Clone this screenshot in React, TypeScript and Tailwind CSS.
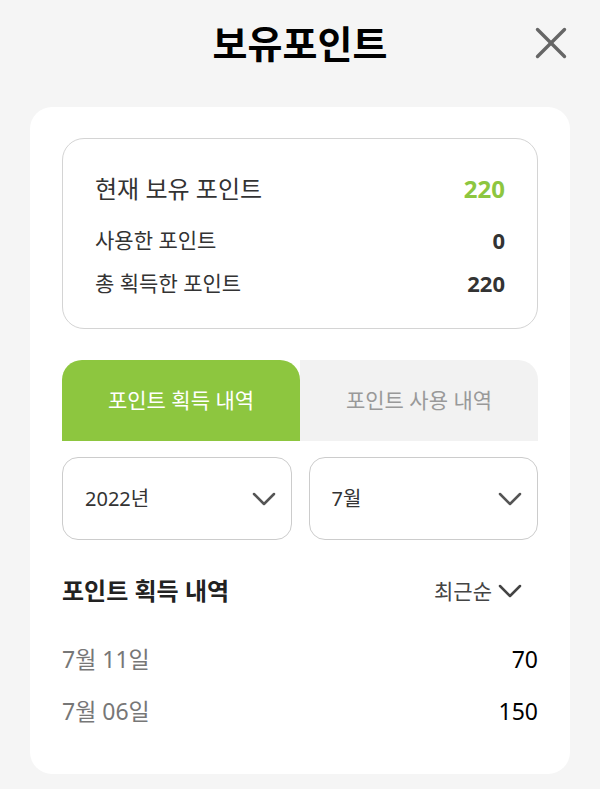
import { X, ChevronDown } from 'lucide-react'

const font = { fontFamily: '"Noto Sans", "Noto Sans CJK KR", sans-serif' }

function Select({ label }: { label: string }) {
  return (
    <div className="flex-1 h-[83px] rounded-[16px] border border-[#cccccc] bg-white flex items-center justify-between pl-[22px] pr-[7px]">
      <span className="text-[20px] text-[#333]">{label}</span>
      <ChevronDown className="w-[40px] h-[40px] text-[#555]" strokeWidth={1.5} />
    </div>
  )
}

export default function App() {
  const history = [
    { date: '7월 11일', amount: 70 },
    { date: '7월 06일', amount: 150 },
  ]

  return (
    <div className="min-h-[789px] bg-[#f5f5f5] flex flex-col" style={font}>
      {/* Header */}
      <div className="relative h-[86px] flex items-center justify-center">
        <h1 className="text-[38px] leading-[44px] font-bold text-black">보유포인트</h1>
        <button className="absolute right-[22px] top-[16px] text-[#666]">
          <X className="w-[54px] h-[54px]" strokeWidth={1.5} />
        </button>
      </div>

      {/* Card */}
      <div className="mx-[30px] mt-[21px] bg-white rounded-[22px] px-[32px] pt-[31px] pb-[47px]">
        {/* Summary */}
        <div className="rounded-[22px] border border-[#d4d4d4] px-[32px] pt-[34px] pb-[30px] flex flex-col">
          <div className="flex items-center justify-between leading-[32px]">
            <span className="text-[24px] text-[#333]">현재 보유 포인트</span>
            <span className="text-[24px] font-bold text-[#8dc63f]">220</span>
          </div>
          <div className="mt-[20px] flex items-center justify-between leading-[30px]">
            <span className="text-[21px] text-[#333]">사용한 포인트</span>
            <span className="text-[22px] font-bold text-[#333]">0</span>
          </div>
          <div className="mt-[13px] flex items-center justify-between leading-[30px]">
            <span className="text-[21px] text-[#333]">총 획득한 포인트</span>
            <span className="text-[22px] font-bold text-[#333]">220</span>
          </div>
        </div>

        {/* Tabs */}
        <div className="mt-[31px] flex h-[81px]">
          <div className="w-[238px] bg-[#8dc63f] rounded-tl-[20px] rounded-tr-[20px] flex items-center justify-center text-white text-[21px]">
            포인트 획득 내역
          </div>
          <div className="flex-1 bg-[#f2f2f2] rounded-tr-[20px] flex items-center justify-center text-[#999] text-[21px]">
            포인트 사용 내역
          </div>
        </div>

        {/* Selects */}
        <div className="mt-[16px] flex gap-[17px]">
          <Select label="2022년" />
          <Select label="7월" />
        </div>

        {/* List header */}
        <div className="mt-[35px] flex items-center justify-between leading-[32px]">
          <h2 className="text-[24px] font-bold text-[#222]">포인트 획득 내역</h2>
          <div className="flex items-center pr-[8px] text-[#444]">
            <span className="text-[21px]">최근순</span>
            <ChevronDown className="w-[40px] h-[40px] -ml-[2px] -my-[4px]" strokeWidth={1.5} />
          </div>
        </div>

        {/* History */}
        <div className="mt-[36px] flex flex-col gap-[20px]">
          {history.map((h) => (
            <div key={h.date} className="flex items-center justify-between leading-[32px]">
              <span className="text-[23px] text-[#777]">{h.date}</span>
              <span className="text-[23px] text-black">{h.amount}</span>
            </div>
          ))}
        </div>
      </div>
    </div>
  )
}
